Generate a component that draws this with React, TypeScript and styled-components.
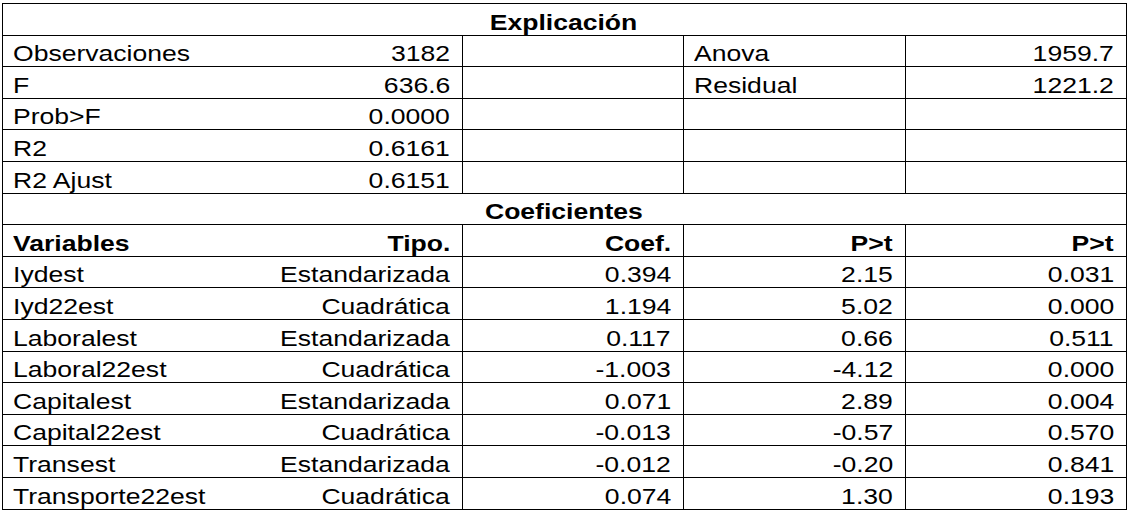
import React from "react";
import styled, { createGlobalStyle } from "styled-components";

const GlobalStyle = createGlobalStyle`
  body {
    margin: 0;
    background: #fff;
  }
`;

const Page = styled.div`
  padding: 3px 0 0 2px;
  background: #fff;
`;

const Table = styled.table`
  border-collapse: collapse;
  table-layout: fixed;
  width: 1124px;
  font-family: "Liberation Sans", Arial, sans-serif;
  font-size: 22.5px;
  color: #000;
`;

const Col = styled.col<{ $w: number }>`
  width: ${(p) => p.$w}px;
`;

const Row = styled.tr`
  height: 31.6px;
`;

type Align = "left" | "right" | "center";

const Cell = styled.td<{ $align?: Align; $bold?: boolean; $joined?: boolean }>`
  border: 1px solid #000;
  ${(p) => (p.$joined ? "border-right: hidden;" : "")}
  padding: 0 12px 0 10px;
  text-align: ${(p) => p.$align || "left"};
  font-weight: ${(p) => (p.$bold ? 700 : 400)};
  vertical-align: bottom;
  white-space: nowrap;
  overflow: hidden;
  line-height: 25px;
`;

// the source table is stretched sideways, so the glyphs are widened
const Text = styled.span<{ $align?: Align }>`
  display: inline-block;
  transform: scaleX(1.18);
  transform-origin: ${(p) => p.$align || "left"} center;
`;

interface SummaryRow {
  label: string;
  value: string;
  extraLabel?: string;
  extraValue?: string;
}

interface CoefRow {
  name: string;
  kind: string;
  coef: string;
  t: string;
  p: string;
}

const widths = [240, 220, 221, 222, 221];

const summary: SummaryRow[] = [
  { label: "Observaciones", value: "3182", extraLabel: "Anova", extraValue: "1959.7" },
  { label: "F", value: "636.6", extraLabel: "Residual", extraValue: "1221.2" },
  { label: "Prob>F", value: "0.0000" },
  { label: "R2", value: "0.6161" },
  { label: "R2 Ajust", value: "0.6151" },
];

const coefs: CoefRow[] = [
  { name: "Iydest", kind: "Estandarizada", coef: "0.394", t: "2.15", p: "0.031" },
  { name: "Iyd22est", kind: "Cuadrática", coef: "1.194", t: "5.02", p: "0.000" },
  { name: "Laboralest", kind: "Estandarizada", coef: "0.117", t: "0.66", p: "0.511" },
  { name: "Laboral22est", kind: "Cuadrática", coef: "-1.003", t: "-4.12", p: "0.000" },
  { name: "Capitalest", kind: "Estandarizada", coef: "0.071", t: "2.89", p: "0.004" },
  { name: "Capital22est", kind: "Cuadrática", coef: "-0.013", t: "-0.57", p: "0.570" },
  { name: "Transest", kind: "Estandarizada", coef: "-0.012", t: "-0.20", p: "0.841" },
  { name: "Transporte22est", kind: "Cuadrática", coef: "0.074", t: "1.30", p: "0.193" },
];

function C({
  children,
  align,
  bold,
  joined,
  span,
}: {
  children?: React.ReactNode;
  align?: Align;
  bold?: boolean;
  joined?: boolean;
  span?: number;
}) {
  return (
    <Cell $align={align} $bold={bold} $joined={joined} colSpan={span}>
      {children ? <Text $align={align}>{children}</Text> : null}
    </Cell>
  );
}

function App() {
  return (
    <Page>
      <GlobalStyle />
      <Table>
        <colgroup>
          {widths.map((w, i) => (
            <Col key={i} $w={w} />
          ))}
        </colgroup>
        <tbody>
          <Row>
            <C span={5} align="center" bold>
              Explicación
            </C>
          </Row>
          {summary.map((r) => (
            <Row key={r.label}>
              <C joined>{r.label}</C>
              <C align="right">{r.value}</C>
              <C />
              <C>{r.extraLabel}</C>
              <C align="right">{r.extraValue}</C>
            </Row>
          ))}
          <Row>
            <C span={5} align="center" bold>
              Coeficientes
            </C>
          </Row>
          <Row>
            <C joined bold>
              Variables
            </C>
            <C align="right" bold>
              Tipo.
            </C>
            <C align="right" bold>
              Coef.
            </C>
            <C align="right" bold>
              P&gt;t
            </C>
            <C align="right" bold>
              P&gt;t
            </C>
          </Row>
          {coefs.map((r) => (
            <Row key={r.name}>
              <C joined>{r.name}</C>
              <C align="right">{r.kind}</C>
              <C align="right">{r.coef}</C>
              <C align="right">{r.t}</C>
              <C align="right">{r.p}</C>
            </Row>
          ))}
        </tbody>
      </Table>
    </Page>
  );
}

export default App;
